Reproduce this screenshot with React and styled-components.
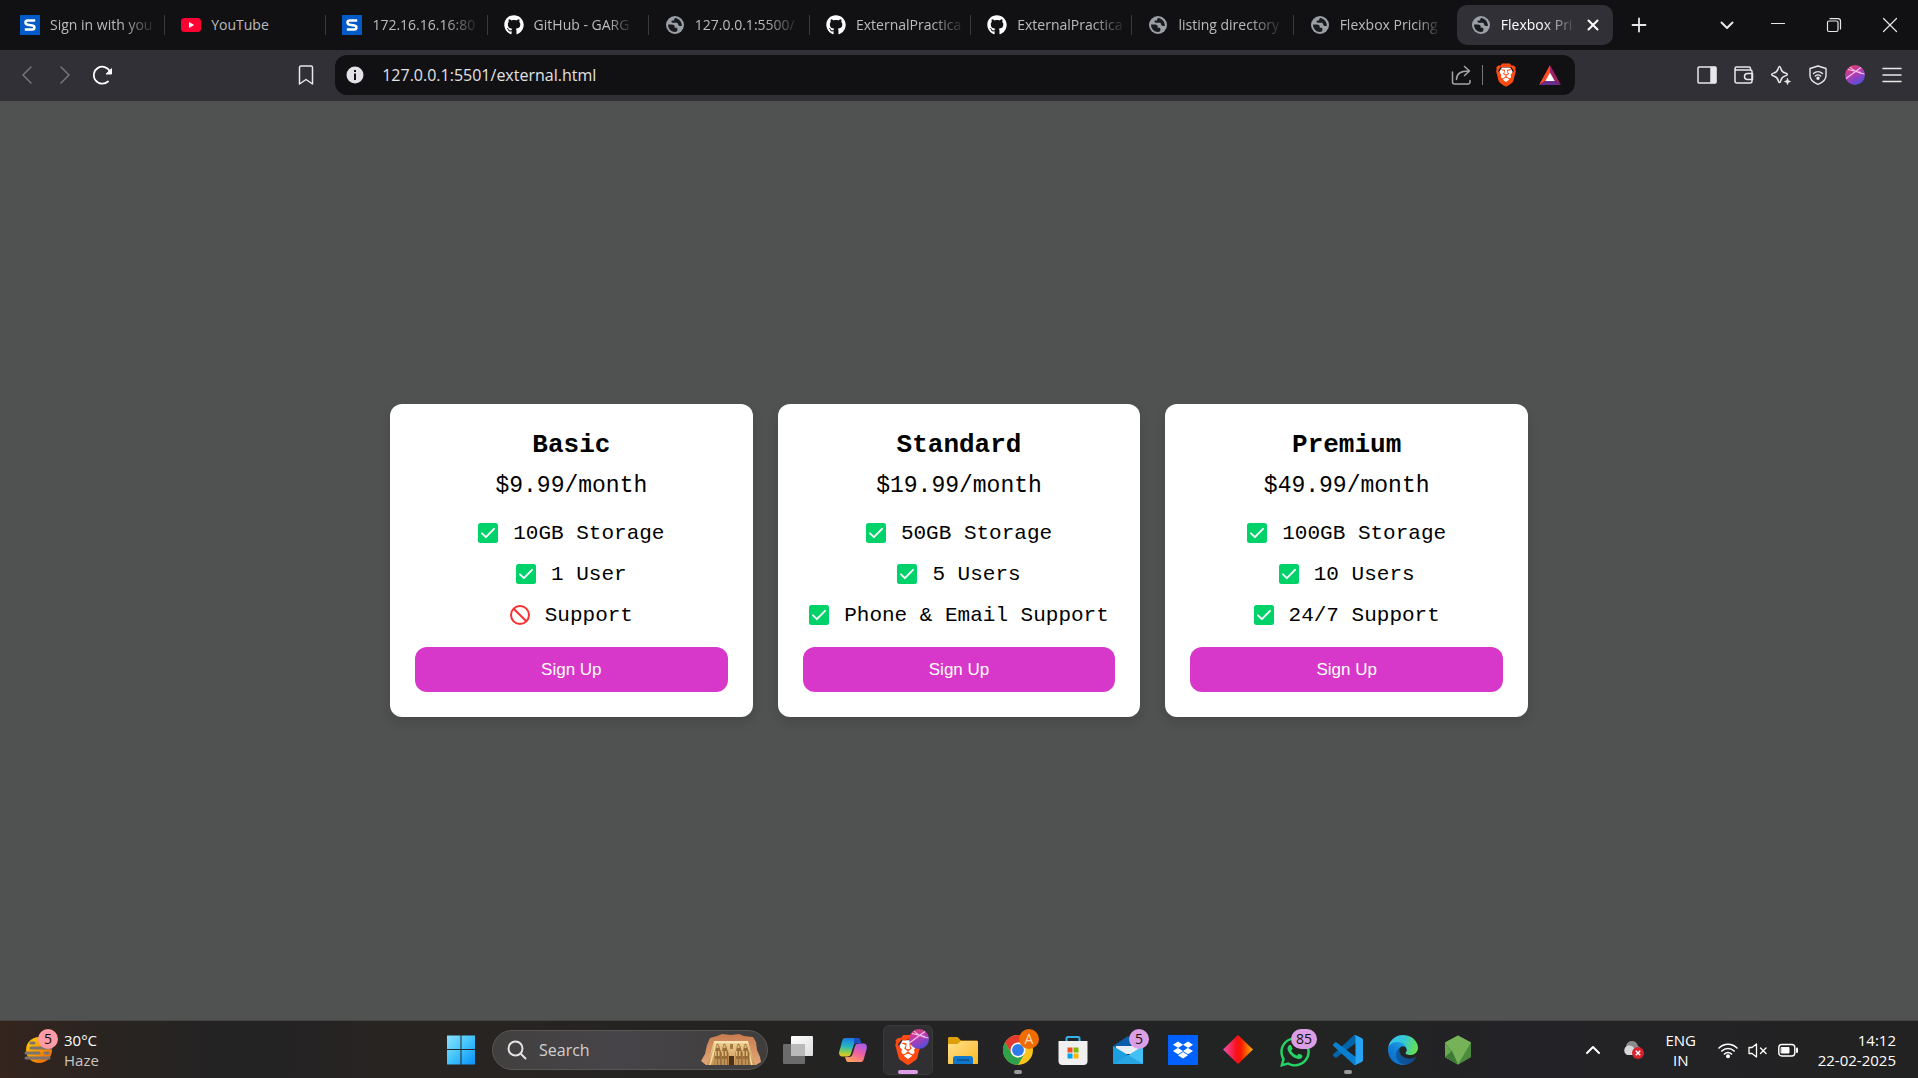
import React from "react";
import styled, { createGlobalStyle, css } from "styled-components";
import { FaGithub, FaBrave, FaDropbox, FaWhatsapp } from "react-icons/fa6";

const UI_FONT = '"Open Sans", "Noto Sans", sans-serif';
const MONO_FONT = '"Liberation Mono", "DejaVu Sans Mono", monospace';

const GlobalStyle = createGlobalStyle`
  *, *::before, *::after { box-sizing: border-box; }
  body { margin: 0; font-family: ${UI_FONT}; background: #505251; }
  button, input { font-family: inherit; }
  h2, p, ul { margin: 0; padding: 0; }
`;

const Desktop = styled.div`
  min-height: 100vh;
  display: flex;
  flex-direction: column;
`;

/* ---------- tab strip ---------- */

const TabStrip = styled.header`
  display: flex;
  height: 50px;
  background: #111113;
  padding-left: 4px;
`;

const TabList = styled.div`
  display: flex;
  flex: 0 1 1612px;
  min-width: 0;
`;

const TabSlot = styled.div`
  flex: 1 1 0;
  min-width: 0;
  display: flex;
  align-items: center;
  padding: 5px 3px 5px 0;
  background: ${(p) =>
    p.$divider
      ? "linear-gradient(#3a3a3d, #3a3a3d) right center / 1px 20px no-repeat"
      : "none"};
`;

const TabBody = styled.div`
  flex: 1;
  min-width: 0;
  height: 40px;
  display: flex;
  align-items: center;
  padding: 0 6px 0 16px;
  border-radius: 10px;
  background: ${(p) => (p.$active ? "#313036" : "transparent")};
  ${(p) => p.$active && css`margin-left: 2px; padding: 0 8px 0 14px;`}
`;

const TabButton = styled.button`
  flex: 1;
  min-width: 0;
  display: flex;
  align-items: center;
  gap: 10px;
  padding: 0;
  border: 0;
  background: none;
  text-align: left;
  color: ${(p) => (p.$active ? "#ffffff" : "#bcbcbe")};
`;

const Favicon = styled.span`
  flex: none;
  display: grid;
  place-items: center;
  width: 20px;
  height: 20px;
`;

const TabTitle = styled.span`
  white-space: nowrap;
  font-size: 14px;
  line-height: 20px;
  mask-image: ${(p) =>
    p.$fade ? `linear-gradient(to right, #000 calc(100% - ${p.$fade}px), rgba(0, 0, 0, 0.15))` : "none"};
`;

const BareButton = styled.button`
  display: grid;
  place-items: center;
  flex: none;
  width: ${(p) => p.$w}px;
  padding: 0;
  border: 0;
  background: none;
  color: ${(p) => p.$color || "#e8e8ea"};
`;

const Grow = styled.div`
  flex: ${(p) => p.$by || 1} 1 0;
`;

/* ---------- toolbar ---------- */

const Toolbar = styled.nav`
  display: flex;
  align-items: center;
  height: 51px;
  padding: 0 8px 1px;
  background: #313036;
`;

const AddressBar = styled.form`
  flex: 1223 1 0;
  min-width: 0;
  display: flex;
  align-items: center;
  height: 40px;
  margin-left: 10px;
  padding: 0 4px 0 11px;
  border-radius: 12px;
  background: #111113;
`;

const UrlInput = styled.input`
  flex: 1;
  min-width: 0;
  margin-left: 18px;
  padding: 0;
  border: 0;
  outline: 0;
  background: none;
  color: #e2e2e4;
  font-size: 16px;
  line-height: 24px;
`;

const Rule = styled.span`
  width: 1px;
  height: 20px;
  background: #77777b;
`;

/* ---------- pricing page ---------- */

const Page = styled.main`
  flex: 1;
  display: flex;
  align-items: center;
  justify-content: center;
  padding: 20px;
  background: #505251;
`;

const Plans = styled.div`
  display: flex;
  gap: 25px;
  width: 100%;
  max-width: 1138px;
`;

const Card = styled.section`
  flex: 1;
  min-width: 0;
  display: flex;
  flex-direction: column;
  padding: 25px;
  border-radius: 12px;
  background: #ffffff;
  box-shadow: 0 5px 12px rgba(0, 0, 0, 0.12);
  text-align: center;
  font-family: ${MONO_FONT};
  color: #000000;
`;

const PlanName = styled.h2`
  font-size: 26px;
  line-height: 32px;
  font-weight: 700;
`;

const Price = styled.p`
  margin-top: 10px;
  font-size: 23px;
  line-height: 30px;
`;

const Features = styled.ul`
  display: flex;
  flex-direction: column;
  gap: 14px;
  margin: 18px 0 19px;
  list-style: none;
`;

const Feature = styled.li`
  display: flex;
  align-items: center;
  justify-content: center;
  gap: 15px;
  white-space: nowrap;
`;

const FeatureText = styled.span`
  padding-top: 3px;
  font-size: 21px;
  line-height: 24px;
`;

const SignUp = styled.button`
  height: 45px;
  border: 0;
  border-radius: 12px;
  background: #d838ca;
  color: #ffffff;
  font-family: "Liberation Sans", Arial, sans-serif;
  font-size: 17px;
`;

/* ---------- taskbar ---------- */

const Taskbar = styled.footer`
  display: grid;
  grid-template-columns: 1fr auto 1fr;
  align-items: center;
  height: 58px;
  border-top: 1px solid #464543;
  background: linear-gradient(to right, #35241e 0, #292421 110px, #232324 240px, #282422 400px, #242322 780px, #232326 1080px, #222422 1300px, #232226 1520px, #232222 100%);
  color: #ffffff;
`;

const Weather = styled.button`
  justify-self: start;
  display: flex;
  align-items: center;
  gap: 10px;
  margin-left: 24px;
  padding: 0;
  border: 0;
  background: none;
  color: inherit;
  text-align: left;
  font-size: 15px;
  line-height: 20px;
`;

const IconBox = styled.span`
  position: relative;
  display: grid;
  place-items: center;
  width: 30px;
  height: 30px;
`;

const Badge = styled.span`
  position: absolute;
  right: ${(p) => p.$right || -6}px;
  top: -6px;
  min-width: 20px;
  height: 20px;
  padding: 0 ${(p) => p.$pad || 0}px;
  border-radius: 10px;
  background: ${(p) => p.$bg};
  color: ${(p) => p.$color || "#111111"};
  font-size: 14px;
  line-height: 20px;
  text-align: center;
`;

const Muted = styled.span`
  display: block;
  color: #c9c6c4;
`;

const Line = styled.span`
  display: block;
`;

const Dock = styled.div`
  display: flex;
  align-items: center;
  gap: 5px;
`;

const SearchBox = styled.label`
  display: flex;
  align-items: center;
  width: 276px;
  height: 40px;
  padding: 0 6px 0 14px;
  gap: 12px;
  border: 1px solid #5a5857;
  border-radius: 20px;
  background: linear-gradient(to right, #42403f, #464448 45%, #3f3e3d);
  color: #e4e2e4;
`;

const SearchInput = styled.input`
  flex: 1;
  min-width: 0;
  padding: 0;
  border: 0;
  outline: 0;
  background: none;
  color: #d2d0d0;
  font-size: 16px;
  line-height: 24px;
  &::placeholder { color: #d2d0d0; opacity: 1; }
`;

const DockButton = styled.button`
  position: relative;
  display: grid;
  place-items: center;
  width: ${(p) => p.$w || 50}px;
  height: 50px;
  padding: 0;
  border: 1px solid ${(p) => (p.$active ? "#39393b" : "transparent")};
  border-radius: 6px;
  background: ${(p) => (p.$active ? "#303033" : "none")};
  &::after {
    content: "";
    display: ${(p) => (p.$mark ? "block" : "none")};
    position: absolute;
    bottom: 0;
    left: 50%;
    width: ${(p) => p.$mark || 0}px;
    height: 4px;
    margin-left: ${(p) => -(p.$mark || 0) / 2}px;
    border-radius: 2px;
    background: ${(p) => (p.$active ? "#dc9fe6" : "#9b9b9c")};
  }
`;

const Tray = styled.div`
  justify-self: end;
  display: flex;
  align-items: center;
  padding-right: 22px;
`;

const TrayButton = styled.button`
  display: grid;
  place-items: center;
  min-width: ${(p) => p.$w}px;
  height: 48px;
  padding: 0;
  border: 0;
  background: none;
  color: #ffffff;
  font-size: 15px;
  line-height: 20px;
  text-align: ${(p) => p.$align || "center"};
`;

const QuickSettings = styled.button`
  display: grid;
  grid-template-columns: repeat(3, 30px);
  place-items: center;
  height: 48px;
  margin: 0 15px 0 4px;
  padding: 0;
  border: 0;
  background: none;
  color: #ffffff;
`;

/* ---------- drawings ---------- */

const Stroke = ({ size = 20, w = 1.5, children }) => (
  <svg width={size} height={size} viewBox="0 0 20 20" fill="none" stroke="currentColor" strokeWidth={w} strokeLinecap="round" strokeLinejoin="round" aria-hidden="true">
    {children}
  </svg>
);

const SophosIcon = () => (
  <svg width="20" height="20" viewBox="0 0 20 20" aria-hidden="true">
    <path d="M0 0h20v20H0z" fill="#005bc8" />
    <path d="M15.2 5.6H7.8c-1.500 0-2.300.8-2.300 2s.8 1.900 2.100 2.100l4.800.7c1.300.2 2 .8 2 2s-.8 2-2.200 2H4.800" fill="none" stroke="#fff" strokeWidth="2.500" />
  </svg>
);

const YouTubeIcon = () => (
  <svg width="20" height="20" viewBox="0 0 20 20" aria-hidden="true">
    <rect x="0" y="3" width="20" height="14" rx="3.5" fill="#ff0033" />
    <path d="M8 7v6l5.2-3z" fill="#fff" />
  </svg>
);

const GlobeIcon = () => (
  <svg width="18" height="18" viewBox="0 0 18 18" aria-hidden="true">
    <circle cx="9" cy="9" r="9" fill="#9aa0a6" />
    <path d="M2 8.4l3.9.1c1.6 0 2.8.9 2.8 2.3v1h1.4c.8 0 1.3.5 1.3 1.3v1.1c0 .8-.7 1.5-1.6 1.6l-1.5.2A7.200 7.200 0 0 1 2 8.400z" fill="#1a1b1f" />
    <path d="M9.200 1.900c-.7.5-1.100 1.100-1.100 2v.6H6.700c-.8 0-1.200.4-1.200 1.100s.4 1.100 1.200 1.100h3.600c1.100 0 1.800.7 1.800 1.600 0 1 .8 1.700 1.800 1.700h2c.2-3.900-2.700-7.700-6.700-8.100z" fill="#1a1b1f" />
  </svg>
);

const GithubIcon = () => <FaGithub size={20} color="#ffffff" aria-hidden="true" />;

const BraveIcon = ({ w, h }) => (
  <svg width={w} height={h} viewBox="0 0 24 28" aria-hidden="true">
    <path d="M7 5h10l3 5-2 9-6 5-6-5-2-9z" fill="#fff" />
    <FaBrave x="-2" y="0" size={28} color="#ff4a12" />
  </svg>
);

const BatIcon = () => (
  <svg width="22" height="20" viewBox="0 0 22 20" aria-hidden="true">
    <path d="M11 0L0 20l6.500-4L11 8z" fill="#ff4724" />
    <path d="M11 0l11 20-6.500-4L11 8z" fill="#9e1f63" />
    <path d="M0 20h22l-6.500-4h-9z" fill="#662d91" />
    <path d="M11 7.500L6.300 16h9.400z" fill="#fff" />
  </svg>
);

const ProfileIcon = ({ size }) => (
  <svg width={size} height={size} viewBox="0 0 20 20" aria-hidden="true">
    <defs>
      <linearGradient id="profile" x1="0.200" y1="0" x2="0.700" y2="1">
        <stop offset="0" stopColor="#e0406a" />
        <stop offset=".45" stopColor="#b83bb0" />
        <stop offset="1" stopColor="#4b50dc" />
      </linearGradient>
    </defs>
    <circle cx="10" cy="10" r="10" fill="url(#profile)" />
    <path d="M1 13.500L16 2.500M5 2c3 3.500 8 6 14.500 7M3 4.500l13 3" stroke="#f3c4e8" strokeWidth="1.100" fill="none" />
  </svg>
);

const WindowsIcon = () => (
  <svg width="30" height="30" viewBox="0 0 30 30" aria-hidden="true">
    <defs>
      <linearGradient id="win" x1="0" y1="0" x2="1" y2="1">
        <stop offset="0" stopColor="#8ae2ff" />
        <stop offset=".5" stopColor="#42c3fc" />
        <stop offset="1" stopColor="#0890f8" />
      </linearGradient>
    </defs>
    <path d="M1 .5h13.500V14H1zM15.500 .5H29V14H15.500zM1 15h13.500v14.500H1zM15.500 15H29v14.500H15.500z" fill="url(#win)" />
  </svg>
);

const TempleIcon = () => (
  <svg width="60" height="32" viewBox="0 0 60 32" aria-hidden="true">
    <defs>
      <linearGradient id="stone" x1="0" y1="0" x2="0" y2="1">
        <stop offset="0" stopColor="#f0d597" />
        <stop offset="1" stopColor="#c99250" />
      </linearGradient>
      <linearGradient id="rock" x1="0" y1="0" x2="0" y2="1">
        <stop offset="0" stopColor="#c97c4f" />
        <stop offset="1" stopColor="#e0a777" />
      </linearGradient>
    </defs>
    <path d="M0 27l4-7 2-9 3-7 7-2 5-2 9 1 8-1 5 2 9 1 3 5 1 8 3 7 1 5-5 3H5z" fill="url(#rock)" />
    <path d="M13 7h34l7 24H6z" fill="url(#stone)" />
    <path d="M13 7h34v2H13z" fill="#f6e3b4" />
    <path d="M15 9l-6 22M45 9l6 22" stroke="#f3dca6" strokeWidth="1.500" />
    {[15, 22, 36, 43].map((x) => (
      <g key={x}>
        <path d={`M${x} 11l1.500-1.500L${x + 3} 11l1 4 1.500 4v12h-7V19l1-4z`} fill="#9a6c38" />
        <path d={`M${x + 0.5} 11h2v3h-2zM${x - 1} 17h1.500v5H${x - 1}zM${x + 2} 17h1.500v5H${x + 2}zM${x - 0.5} 25h1v6h-1zM${x + 2.5} 25h1v6h-1z`} fill="#e0b878" />
      </g>
    ))}
    <path d="M28 22h5v9h-5z" fill="#4b2f17" />
    <path d="M29 10h3v5h-3z" fill="#a67a40" />
  </svg>
);

const TaskViewIcon = () => (
  <svg width="30" height="30" viewBox="0 0 30 30" aria-hidden="true">
    <defs>
      <linearGradient id="pane" x1="0" y1="0" x2="1" y2="1">
        <stop offset="0" stopColor="#ffffff" />
        <stop offset="1" stopColor="#dcdcdc" />
      </linearGradient>
    </defs>
    <rect x="8" y="1" width="22" height="20" rx="1" fill="url(#pane)" />
    <rect x="0" y="9" width="22" height="20" rx="1" fill="#6b6b6b" />
    <path d="M8 9h14v12H8z" fill="#b9b9b9" />
  </svg>
);

const CopilotIcon = () => (
  <svg width="30" height="30" viewBox="0 0 30 30" aria-hidden="true">
    <defs>
      <linearGradient id="cpA" x1="0.300" y1="0" x2="0.200" y2="1">
        <stop offset="0" stopColor="#1c7be0" />
        <stop offset=".45" stopColor="#25b6c4" />
        <stop offset=".75" stopColor="#8fce4a" />
        <stop offset="1" stopColor="#f5c51e" />
      </linearGradient>
      <linearGradient id="cpB" x1="0.800" y1="0" x2="0.300" y2="1">
        <stop offset="0" stopColor="#a45cf0" />
        <stop offset=".5" stopColor="#ef5fa0" />
        <stop offset="1" stopColor="#ffa25a" />
      </linearGradient>
    </defs>
    <path d="M7 3h12c2 0 2.700 1 3.200 2.600L23 8h-4c-2 0-3 1-3.600 3l-2.300 7.500c-.6 2-1.600 3-3.600 3H5c-3 0-4.500-2-3.700-5L4 6.500C4.700 4 5.500 3 7 3z" fill="url(#cpA)" />
    <path d="M23 27H11c-2 0-2.700-1-3.200-2.600L7 22h4c2 0 3-1 3.600-3l2.300-7.500c.6-2 1.600-3 3.600-3H25c3 0 4.500 2 3.700 5L26 23.500c-.7 2.500-1.500 3.500-3 3.500z" fill="url(#cpB)" />
    <path d="M16 3h3c2 0 2.700 1 3.200 2.600L23 8h-4c-1.500 0-2.400.6-3 1.800z" fill="#1b4fc4" />
  </svg>
);

const FolderIcon = () => (
  <svg width="30" height="30" viewBox="0 0 30 30" aria-hidden="true">
    <defs>
      <linearGradient id="folder" x1="0" y1="0" x2="1" y2="1">
        <stop offset="0" stopColor="#ffe08a" />
        <stop offset="1" stopColor="#fbb928" />
      </linearGradient>
    </defs>
    <path d="M0 3.500C0 2.700.7 2 1.500 2h8L13 5.500h15.500c.8 0 1.500.7 1.500 1.500v8H0z" fill="#dd9f0a" />
    <path d="M0 9h9.500L13 6h15.500c.8 0 1.500.7 1.500 1.500V28c0 .6-.4 1-1 1H1c-.6 0-1-.4-1-1z" fill="url(#folder)" />
    <path d="M5 29v-5.500c0-1.400 1-2.500 2.500-2.500h15c1.500 0 2.500 1.100 2.500 2.500V29z" fill="#0f78cc" />
    <path d="M9 25h12" stroke="#0b4f86" strokeWidth="1.500" />
  </svg>
);

const ChromeIcon = () => (
  <svg width="30" height="30" viewBox="0 0 48 48" aria-hidden="true">
    <circle cx="24" cy="24" r="24" fill="#fcc31e" />
    <path d="M24 0A24 24 0 0 0 3.200 12l10.400 18L24 12h20.800A24 24 0 0 0 24 0z" fill="#e33b2e" />
    <path d="M3.200 12A24 24 0 0 0 24 48l10.400-18-10.400 6c-4 0-8-2-10.400-6z" fill="#2da14c" />
    <circle cx="24" cy="24" r="12" fill="#fff" />
    <circle cx="24" cy="24" r="9.500" fill="#2d7cea" />
  </svg>
);

const StoreIcon = () => (
  <svg width="30" height="30" viewBox="0 0 30 30" aria-hidden="true">
    <path d="M8.500 7V3.500C8.500 2.500 9 2 10 2h10c1 0 1.500.5 1.500 1.500V7" fill="none" stroke="#32b4e8" strokeWidth="2" />
    <path d="M.500 6h29v20a4 4 0 0 1-4 4h-21a4 4 0 0 1-4-4z" fill="#f0f0f0" />
    <path d="M9.500 12.500h5v5h-5z" fill="#f25022" />
    <path d="M15.500 12.500h5v5h-5z" fill="#7fba00" />
    <path d="M9.500 18.500h5v5h-5z" fill="#00a4ef" />
    <path d="M15.500 18.500h5v5h-5z" fill="#ffb900" />
  </svg>
);

const MailIcon = () => (
  <svg width="30" height="30" viewBox="0 0 30 30" aria-hidden="true">
    <path d="M0 11L15 1l15 10v6H0z" fill="#0a5ca8" />
    <path d="M3 11h24v8H3z" fill="#e9eef2" />
    <path d="M0 11l30 18H1c-.6 0-1-.4-1-1z" fill="#1c9fe0" />
    <path d="M30 11v17c0 .6-.4 1-1 1H1L30 11z" fill="#41c0f3" />
    <path d="M12 22l3-2 15 9H1z" fill="#1793d8" opacity=".6" />
  </svg>
);

const DropboxTile = styled.span`
  display: grid;
  place-items: center;
  width: 30px;
  height: 30px;
  background: #0061fe;
  color: #ffffff;
`;

const DiamondIcon = () => (
  <svg width="30" height="30" viewBox="0 0 30 30" aria-hidden="true">
    <defs>
      <linearGradient id="diamond">
        <stop offset="0" stopColor="#f24fb4" />
        <stop offset=".45" stopColor="#f8101a" />
        <stop offset=".6" stopColor="#fa1a00" />
        <stop offset="1" stopColor="#f9b406" />
      </linearGradient>
    </defs>
    <path d="M15 0l15 14.500L15 29 0 14.500z" fill="url(#diamond)" />
  </svg>
);

const CodeIcon = () => (
  <svg width="30" height="30" viewBox="0 0 100 100" aria-hidden="true">
    <path d="M96.460 10.800L75.860.870a6.230 6.230 0 0 0-7.100 1.200L1.300 63.580a4.170 4.170 0 0 0 0 6.160l5.500 5a4.160 4.160 0 0 0 5.320.240l81.230-61.620A4.140 4.140 0 0 1 100 16.700z" fill="#0065a9" />
    <path d="M96.460 89.200l-20.600 9.920a6.230 6.230 0 0 1-7.100-1.200L1.300 36.420a4.170 4.170 0 0 1 0-6.170l5.500-5a4.160 4.160 0 0 1 5.320-.230l81.230 61.620A4.140 4.140 0 0 0 100 83.300z" fill="#0a7fd0" />
    <path d="M75.860 99.130a6.230 6.230 0 0 1-7.100-1.210A3.660 3.660 0 0 0 75 95.330V4.670a3.660 3.660 0 0 0-6.250-2.590 6.230 6.230 0 0 1 7.100-1.200l20.600 9.900A6.250 6.250 0 0 1 100 16.400v67.200a6.250 6.250 0 0 1-3.540 5.630z" fill="#27a5f2" />
  </svg>
);

const EdgeIcon = () => (
  <svg width="30" height="30" viewBox="0 0 256 256" aria-hidden="true">
    <defs>
      <linearGradient id="edgeA" x1="0.200" y1="0.400" x2="1" y2="0.600">
        <stop offset="0" stopColor="#0c59a4" />
        <stop offset="1" stopColor="#114a8b" />
      </linearGradient>
      <linearGradient id="edgeB" x1="0.900" y1="0.300" x2="0.300" y2="1">
        <stop offset="0" stopColor="#1b9de2" />
        <stop offset=".5" stopColor="#127fd6" />
        <stop offset="1" stopColor="#0a70cc" />
      </linearGradient>
      <linearGradient id="edgeC" x1="0" y1="0.300" x2="1" y2="0.500">
        <stop offset="0" stopColor="#35c1f1" />
        <stop offset=".5" stopColor="#36c7d8" />
        <stop offset="1" stopColor="#66e04c" />
      </linearGradient>
    </defs>
    <path d="M231 190.500c-3.400 1.800-6.900 3.400-10.500 4.700a101.500 101.500 0 0 1-35.900 6.500c-47.300 0-88.500-32.500-88.500-74.300a31.500 31.500 0 0 1 16.400-27.300c-42.800 1.800-53.800 46.400-53.800 72.500 0 74 68.100 81.400 82.800 81.400 7.900 0 19.800-2.300 27-4.600l1.300-.4a128.300 128.300 0 0 0 66.600-52.800 4 4 0 0 0-5.400-5.700z" fill="url(#edgeA)" />
    <path d="M105.700 241.400a79.200 79.200 0 0 1-22.700-21.300 80.700 80.700 0 0 1 29.500-120c3.200-1.500 8.500-4.100 15.600-4a32.400 32.400 0 0 1 25.700 13 31.900 31.900 0 0 1 6.300 18.700c0-.2 24.500-79.600-80-79.600-43.900 0-80 41.600-80 78.200a130.200 130.200 0 0 0 12.100 56 128 128 0 0 0 156.400 67 75.500 75.500 0 0 1-62.800-8z" fill="url(#edgeB)" />
    <path d="M152.300 148.900c-.9 1-3.400 2.500-3.400 5.600 0 2.600 1.700 5.200 4.800 7.300 14.300 10 41.400 8.600 41.500 8.600a59.600 59.600 0 0 0 30.300-8.300 61.400 61.400 0 0 0 30.400-52.900c.3-22.400-8-37.300-11.300-43.900C223.500 23.900 177.700 0 128 0A128 128 0 0 0 0 126.200c.5-36.500 36.800-66 80-66 3.500 0 23.500.3 42 10.100a72.600 72.600 0 0 1 30.900 29.300c6.100 10.600 7.200 24.100 7.200 29.500s-2.700 13.300-7.800 19.800z" fill="url(#edgeC)" />
  </svg>
);

const HexIcon = () => (
  <svg width="30" height="30" viewBox="0 0 30 30" aria-hidden="true">
    <path d="M15 .500l13 7v14.500l-13 7.500-13-7.500V7.500z" fill="#5b9b45" />
    <path d="M15 .500l13 7L16 29l-1 .500L9 16 2 7.500z" fill="#76b257" />
    <path d="M2 7.500L15 29.500 2 22z" fill="#6aa84f" />
    <path d="M2 22l7-6 6 13.500z" fill="#3e7a35" />
    <path d="M28 7.500V22l-13 7.500z" fill="#4c8b3f" />
  </svg>
);

const HazeIcon = () => (
  <svg width="30" height="30" viewBox="0 0 30 30" aria-hidden="true">
    <defs>
      <linearGradient id="sun" x1="0" y1="0" x2="1" y2="1">
        <stop offset="0" stopColor="#ffd400" />
        <stop offset="1" stopColor="#ee5a06" />
      </linearGradient>
    </defs>
    <circle cx="15" cy="15" r="13" fill="url(#sun)" />
    <path d="M7 8h3M7 13h20M2 18h13M21 18h3M2 23h23" stroke="#7b7470" strokeWidth="3" strokeLinecap="round" />
  </svg>
);

const CloudErrorIcon = () => (
  <svg width="22" height="20" viewBox="0 0 22 20" aria-hidden="true">
    <path d="M4 8a6 6 0 0 1 12-2 5 5 0 0 1 2 8H9z" fill="#8b8b8b" />
    <path d="M5 15a5 5 0 0 1 0-9c3-1 6 0 7 2l2 7z" fill="#d8d8d8" />
    <circle cx="16" cy="13" r="6" fill="#d8232f" />
    <path d="M13.800 10.800l4.400 4.400M18.200 10.800l-4.400 4.400" stroke="#fff" strokeWidth="1.400" />
  </svg>
);

const CheckMark = () => (
  <svg width="20" height="20" viewBox="0 0 20 20" role="img" aria-label="Included">
    <rect width="20" height="20" rx="2.500" fill="#00d26a" />
    <path d="M4 10.300l3.900 3.900L16 5.800" fill="none" stroke="#fff" strokeWidth="1.900" strokeLinecap="round" strokeLinejoin="round" />
  </svg>
);

const NoEntry = () => (
  <svg width="20" height="20" viewBox="0 0 20 20" role="img" aria-label="Not included">
    <circle cx="10" cy="10" r="9" fill="none" stroke="#f83030" strokeWidth="2" />
    <path d="M3.700 3.700l12.600 12.600" stroke="#f83030" strokeWidth="2" />
  </svg>
);

/* ---------- data ---------- */

const TABS = [
  { title: "Sign in with you", icon: SophosIcon, fade: 30 },
  { title: "YouTube", icon: YouTubeIcon },
  { title: "172.16.16.16:80", icon: SophosIcon, fade: 30 },
  { title: "GitHub - GARG", icon: GithubIcon, fade: 20 },
  { title: "127.0.0.1:5500/", icon: GlobeIcon, fade: 30 },
  { title: "ExternalPractica", icon: GithubIcon, fade: 30 },
  { title: "ExternalPractica", icon: GithubIcon, fade: 30 },
  { title: "listing directory", icon: GlobeIcon, fade: 30 },
  { title: "Flexbox Pricing", icon: GlobeIcon, fade: 20 },
  { title: "Flexbox Pri", icon: GlobeIcon, fade: 30, active: true },
];

const PLANS = [
  {
    name: "Basic",
    price: "$9.99/month",
    features: [["10GB Storage", true], ["1 User", true], ["Support", false]],
  },
  {
    name: "Standard",
    price: "$19.99/month",
    features: [["50GB Storage", true], ["5 Users", true], ["Phone & Email Support", true]],
  },
  {
    name: "Premium",
    price: "$49.99/month",
    features: [["100GB Storage", true], ["10 Users", true], ["24/7 Support", true]],
  },
];

const ACCENT = "#dc9fe6";

const APPS = [
  { label: "Task view", icon: <TaskViewIcon /> },
  { label: "Copilot", icon: <CopilotIcon /> },
  { label: "Brave", icon: <><BraveIcon w={26} h={30} /><Badge $bg="none"><ProfileIcon size={20} /></Badge></>, active: true, mark: 20 },
  { label: "File Explorer", icon: <FolderIcon /> },
  { label: "Chrome", icon: <><ChromeIcon /><Badge $bg="#ef6c00" $color="#fbd9c0">A</Badge></>, mark: 8 },
  { label: "Store", icon: <StoreIcon /> },
  { label: "Mail", icon: <><MailIcon /><Badge $bg={ACCENT}>5</Badge></> },
  { label: "Dropbox", icon: <DropboxTile><FaDropbox size={20} /></DropboxTile> },
  { label: "Diamond", icon: <DiamondIcon /> },
  { label: "WhatsApp", icon: <><FaWhatsapp size={34} color="#25d366" /><Badge $bg={ACCENT} $right={-9} $pad={5}>85</Badge></> },
  { label: "Code", icon: <CodeIcon />, mark: 8 },
  { label: "Edge", icon: <EdgeIcon /> },
  { label: "Compass", icon: <HexIcon /> },
];

/* ---------- sections ---------- */

function BrowserTabs() {
  return (
    <TabStrip>
      <TabList role="tablist">
        {TABS.map(({ title, icon: Icon, active, fade }, i) => (
          <TabSlot key={i} $divider={i < TABS.length - 2}>
            <TabBody $active={active}>
              <TabButton role="tab" aria-selected={!!active} $active={active}>
                <Favicon><Icon /></Favicon>
                <TabTitle $fade={fade}>{title}</TabTitle>
              </TabButton>
              {active && (
                <BareButton $w={24} $color="#fff" aria-label="Close tab">
                  <Stroke size={20} w={2}><path d="M5.500 5.500l9 9M14.500 5.500l-9 9" /></Stroke>
                </BareButton>
              )}
            </TabBody>
          </TabSlot>
        ))}
      </TabList>
      <BareButton $w={46} aria-label="New tab"><Stroke w={1.8}><path d="M10 3.500v13M3.500 10h13" /></Stroke></BareButton>
      <Grow />
      <BareButton $w={46} aria-label="Search tabs"><Stroke w={2}><path d="M4.500 7.500L10 13l5.500-5.500" /></Stroke></BareButton>
      <BareButton $w={56} aria-label="Minimize"><Stroke w={1.200}><path d="M3.500 8.500h13" /></Stroke></BareButton>
      <BareButton $w={56} aria-label="Restore">
        <Stroke w={1.200}><rect x="3.500" y="6" width="10.500" height="10.500" rx="1.500" /><path d="M6 3.700h8a2.500 2.500 0 0 1 2.500 2.500V14" /></Stroke>
      </BareButton>
      <BareButton $w={56} aria-label="Close"><Stroke w={1.200}><path d="M3.500 3.500l13 13M16.500 3.500l-13 13" /></Stroke></BareButton>
    </TabStrip>
  );
}

function BrowserToolbar() {
  return (
    <Toolbar>
      <BareButton $w={38} $color="#77777b" aria-label="Back"><Stroke><path d="M14 2l-8 8 8 8" /></Stroke></BareButton>
      <BareButton $w={38} $color="#77777b" aria-label="Forward"><Stroke><path d="M6 2l8 8-8 8" /></Stroke></BareButton>
      <BareButton $w={38} $color="#ffffff" aria-label="Reload">
        <Stroke w={1.800}><path d="M15 16.500A8.500 8.500 0 1 1 17 6.500" /><path d="M18.500 4v5h-5z" fill="currentColor" strokeWidth="1" /></Stroke>
      </BareButton>
      <Grow $by={165} />
      <BareButton $w={38} aria-label="Bookmark"><Stroke><path d="M5 1h10a1.500 1.500 0 0 1 1.500 1.500V19L10 14.500 3.500 19V2.500A1.500 1.500 0 0 1 5 1z" /></Stroke></BareButton>
      <AddressBar onSubmit={(e) => e.preventDefault()}>
        <svg width="18" height="18" viewBox="0 0 18 18" aria-hidden="true">
          <circle cx="9" cy="9" r="8.500" fill="#e4e2e8" />
          <path d="M8 4h2v2H8zM8 7.500h2V14H8z" fill="#111113" />
        </svg>
        <UrlInput aria-label="Address" defaultValue="127.0.0.1:5501/external.html" />
        <BareButton type="button" $w={42} $color="#a5a5a9" aria-label="Share">
          <Stroke><path d="M1.500 7v10a2 2 0 0 0 2 2h14a2 2 0 0 0 1.500-2v-1.500M5.500 14.500c0-6 4-8.500 12-8.500M13.500 1.500l5 4.500-5 4.500" /></Stroke>
        </BareButton>
        <Rule />
        <BareButton type="button" $w={46} aria-label="Shields"><BraveIcon w={20} h={24} /></BareButton>
        <BareButton type="button" $w={42} aria-label="Rewards"><BatIcon /></BareButton>
      </AddressBar>
      <Grow $by={113} />
      <BareButton $w={37} aria-label="Sidebar"><Stroke><rect x="1" y="2" width="18" height="16" rx="1" /><path d="M14 2.500h4.500v15H14z" fill="currentColor" /></Stroke></BareButton>
      <BareButton $w={37} aria-label="Wallet">
        <Stroke><path d="M1 3.500V16a2 2 0 0 0 2 2h13a2 2 0 0 0 2-2V6.500A1.500 1.500 0 0 0 16.500 5H2.500A1.500 1.500 0 0 1 2.500 2H15a1.500 1.500 0 0 1 1.500 1.500V5" /><path d="M18.500 8.500h-5a3 3 0 0 0 0 6h5z" /></Stroke>
      </BareButton>
      <BareButton $w={37} aria-label="Leo">
        <Stroke><path d="M8.500 1.500c.8 0 1 .6 1.300 2 .7 2.800 1.800 3.900 4.500 4.600 1.500.4 2 .6 2 1.400s-.5 1-2 1.400c-2.700.7-3.800 1.800-4.500 4.600-.3 1.400-.5 2-1.300 2s-1-.6-1.300-2c-.7-2.800-1.800-3.900-4.500-4.600-1.500-.4-2-.6-2-1.400s.5-1 2-1.400c2.700-.7 3.800-1.800 4.500-4.600.3-1.400.5-2 1.300-2z" /><path d="M16.500 13.500l.8 2.200 2.200.8-2.200.8-.8 2.200-.8-2.200-2.200-.8 2.200-.8z" fill="currentColor" strokeWidth=".8" /></Stroke>
      </BareButton>
      <BareButton $w={37} aria-label="VPN">
        <Stroke w={1.400}><path d="M10 1l8 2.500v7c0 4.500-4 7.300-8 8.800-4-1.500-8-4.300-8-8.800v-7z" /><path d="M5.500 8.500c2.600-2.500 6.400-2.500 9 0M7.300 11c1.700-1.400 3.700-1.400 5.400 0" /><circle cx="10" cy="13.300" r="1" fill="currentColor" /></Stroke>
      </BareButton>
      <BareButton $w={37} aria-label="Profile"><ProfileIcon size={20} /></BareButton>
      <BareButton $w={37} aria-label="Menu"><Stroke><path d="M1 3.500h18M1 10h18M1 16.500h18" /></Stroke></BareButton>
    </Toolbar>
  );
}

function PricingPage() {
  return (
    <Page>
      <Plans>
        {PLANS.map((plan) => (
          <Card key={plan.name}>
            <PlanName>{plan.name}</PlanName>
            <Price>{plan.price}</Price>
            <Features>
              {plan.features.map(([label, included]) => (
                <Feature key={label}>
                  {included ? <CheckMark /> : <NoEntry />}
                  <FeatureText>{label}</FeatureText>
                </Feature>
              ))}
            </Features>
            <SignUp type="button">Sign Up</SignUp>
          </Card>
        ))}
      </Plans>
    </Page>
  );
}

function SystemTaskbar() {
  return (
    <Taskbar>
      <Weather>
        <IconBox><HazeIcon /><Badge $bg="#ff9ba6" $right={-4}>5</Badge></IconBox>
        <span><Line>30°C</Line><Muted>Haze</Muted></span>
      </Weather>
      <Dock>
        <DockButton $w={52} aria-label="Start"><WindowsIcon /></DockButton>
        <SearchBox>
          <Stroke size={20} w={2}><circle cx="8.500" cy="8.500" r="7" /><path d="M13.500 13.500l5 5" /></Stroke>
          <SearchInput type="text" placeholder="Search" aria-label="Search" />
          <TempleIcon />
        </SearchBox>
        {APPS.map((app) => (
          <DockButton key={app.label} aria-label={app.label} $active={app.active} $mark={app.mark}>
            <IconBox>{app.icon}</IconBox>
          </DockButton>
        ))}
      </Dock>
      <Tray>
        <TrayButton $w={40} aria-label="Show hidden icons"><Stroke w={2}><path d="M4 13l6-6 6 6" /></Stroke></TrayButton>
        <TrayButton $w={40} aria-label="OneDrive"><CloudErrorIcon /></TrayButton>
        <TrayButton $w={56}><span><Line>ENG</Line><Line>IN</Line></span></TrayButton>
        <QuickSettings aria-label="Quick settings">
          <Stroke w={1.600}><path d="M1 8c5-5 13-5 18 0M3.800 11c3.600-3.400 8.800-3.400 12.400 0M6.500 14c2-1.900 5-1.900 7 0" /><circle cx="10" cy="16.300" r="1.200" fill="currentColor" /></Stroke>
          <Stroke w={1.300}><path d="M1 7.500h3L8.500 4v13L4 13.500H1zM12.500 8l5.500 5.500M18 8l-5.500 5.500" /></Stroke>
          <Stroke w={1.400}><rect x="0.800" y="4.500" width="16" height="11.500" rx="3" /><path d="M19 8.500v3.500" strokeWidth="2" /><path d="M3.500 7.500h7.500V13H3.500z" fill="currentColor" strokeWidth="1" /></Stroke>
        </QuickSettings>
        <TrayButton $w={78} $align="right"><span><Line>14:12</Line><Line>22-02-2025</Line></span></TrayButton>
      </Tray>
    </Taskbar>
  );
}

export default function App() {
  return (
    <Desktop>
      <GlobalStyle />
      <BrowserTabs />
      <BrowserToolbar />
      <PricingPage />
      <SystemTaskbar />
    </Desktop>
  );
}
